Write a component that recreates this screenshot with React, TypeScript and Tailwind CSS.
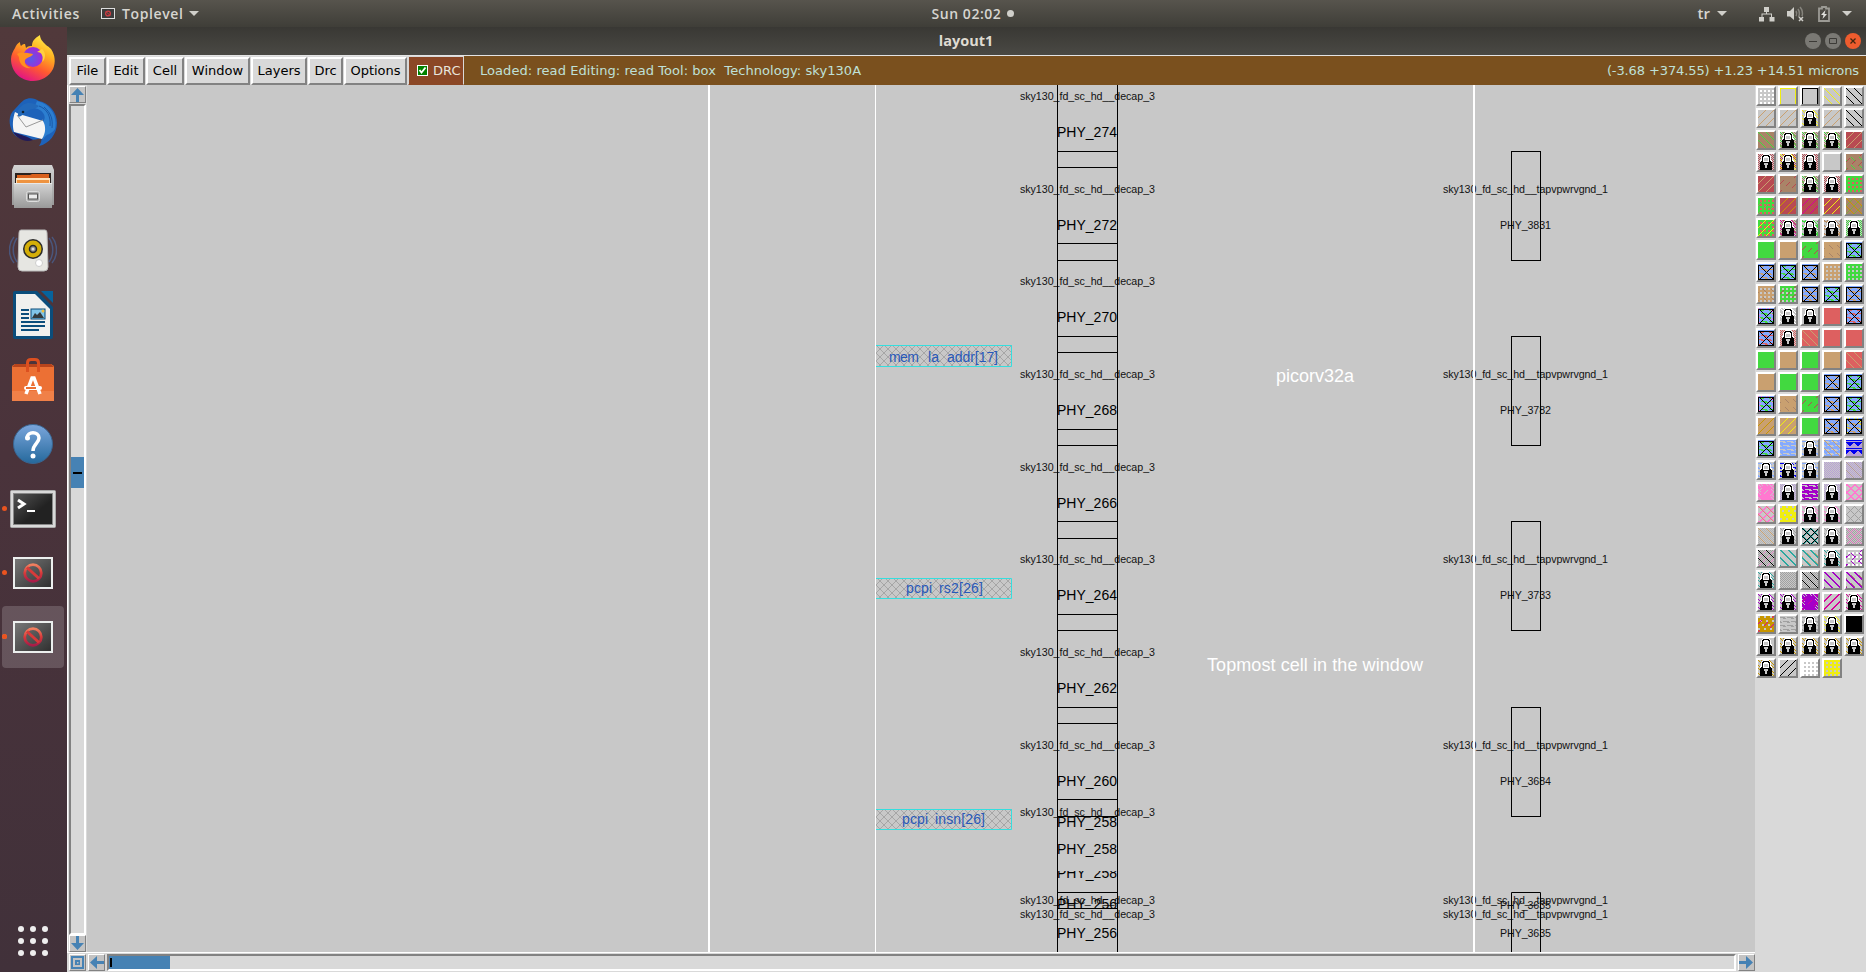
import React from "react";

const GRAY = "#c8c8c8";
const GREEN = "#42d940";
const TAN = "#c9a070";
const BROWN = "#a98468";
const RED = "#b84a52";
const SALMON = "#dd6060";
const SKY = "#84aaff";
const BLUE = "#0000f0";
const LILAC = "#b79fd6";
const PINK = "#ff78d0";
const PURPLE = "#a400c8";
const MAGENTA = "#d8009a";
const YELLOW = "#f0ee10";
const GOLD = "#c89600";
const TEAL = "#2aa8a0";
const DARK = "#a0a0a0";

/* ---------- layer palette ---------- */

const mod = (n: number, m: number) => ((n % m) + m) % m;

/* Stipples on a 16 x 16 grid: which pixels take the mark's colour. */
const stipples = {
  up: (x: number, y: number) => mod(x + y, 8) === 7,
  down: (x: number, y: number) => mod(x - y, 8) === 0,
  upWide: (x: number, y: number) => mod(x + y, 8) > 5,
  downWide: (x: number, y: number) => mod(x - y, 8) < 2,
  dashUp: (x: number, y: number) => mod(x + y, 8) === 7 && mod(x + 2 * Math.floor((x + y) / 8), 8) < 4,
  dashDown: (x: number, y: number) => mod(x - y, 8) === 2 && mod(x + 3, 8) < 4,
  dots: (x: number, y: number) => mod(x, 4) > 1 && mod(y, 4) > 1,
  check: (x: number, y: number) => mod(x + y, 2) === 0,
  waves: (x: number, y: number) => mod(y, 4) === 1 ? mod(x + y, 8) < 6 : mod(y, 4) === 2 && mod(x + y, 8) > 4,
  net: (x: number, y: number) => mod(x - y, 8) === 0 || mod(x + y, 8) === 0,
  netWide: (x: number, y: number) => mod(x - y, 8) < 2 || mod(x + y, 8) < 2,
  frame: (x: number, y: number) => y === 0 || x === 0 || x === 15,
  spots: (x: number, y: number) => mod(y, 4) < 2 && mod(x + 4 * Math.floor(y / 4), 6) < 2,
  tris: (x: number, y: number) => mod(y, 8) < 1 || (mod(y, 8) > 1 && mod(y, 8) < 6 && Math.abs(mod(x + (y > 7 ? 4 : 0), 8) - 3.5) < 6 - mod(y, 8)),
  edge: (x: number, y: number) => (x < 3 || x > 12 || y < 2) && mod(x * 3 + y * 5, 8) < 2,
  cross: (x: number, y: number) => y > 0 && (y === 1 || y === 15 || x === 0 || x === 15 || x === y - 0 || x + y === 16),
};

type Stipple = keyof typeof stipples;
type Mark = [Stipple, string] | ["lock"];
type Cell = { base: string; marks: Mark[] };

const c = (base: string, ...marks: Mark[]): Cell => ({ base, marks });
const lock = (...marks: Mark[]): Cell => c(GRAY, ...marks, ["lock"]);
const metal = (a: string, b?: string): Cell =>
  c(SKY, ["waves", a], ...(b ? [["edge", b] as Mark] : []), ["cross", "#000"]);

const cells: Cell[] = [
  c(GRAY, ["dots", "#fff"]), c(GRAY, ["frame", YELLOW]), c(GRAY, ["frame", "#000"]), c(GRAY, ["down", YELLOW]), c(GRAY, ["down", "#000"]),
  c(GRAY, ["up", TAN]), c(GRAY, ["up", TAN]), lock(["edge", YELLOW]), c(GRAY, ["up", TAN]), c(GRAY, ["down", "#000"]),
  c(BROWN, ["down", GREEN]), lock(["check", BROWN], ["edge", GREEN]), lock(["check", BROWN], ["edge", GREEN]), lock(["check", BROWN], ["edge", GREEN]), c(RED, ["up", TAN]),
  lock(["check", RED]), lock(["check", RED], ["edge", YELLOW]), lock(["check", RED]), c(GRAY), c(BROWN, ["dashDown", GREEN], ["dashUp", RED]),
  c(RED, ["up", TAN]), c(BROWN, ["dashUp", RED]), lock(["check", BROWN], ["edge", GREEN]), lock(["check", RED]), c(GREEN, ["dots", SALMON]),
  c(GREEN, ["dots", SALMON], ["dashUp", BROWN]), c(RED, ["up", GOLD]), c(RED, ["up", MAGENTA]), c(RED, ["up", YELLOW]), c(BROWN, ["down", GOLD], ["up", "#80a840"]),
  c(GREEN, ["dots", SALMON], ["up", YELLOW]), lock(["check", BROWN], ["edge", MAGENTA]), lock(["waves", GREEN], ["edge", GREEN]), lock(["waves", TAN], ["edge", BROWN]), lock(["check", GREEN]),
  c(GREEN), c(TAN), c(GREEN, ["dashUp", RED]), c(TAN, ["dashDown", BROWN]), metal(GREEN),
  metal(TAN), metal(GREEN), metal(TAN), c(TAN, ["dots", GRAY]), c(GREEN, ["dots", GRAY]),
  c(TAN, ["dots", GRAY], ["dashDown", BROWN]), c(GREEN, ["dots", GRAY], ["dashUp", RED]), metal(TAN), metal(GREEN), metal(TAN),
  metal(GREEN, PINK), lock(["edge", "#fff"]), lock(), c(SALMON), metal(SALMON),
  metal(SALMON), lock(["check", SALMON]), c(SALMON, ["down", TAN]), c(SALMON), c(SALMON),
  c(GREEN), c(TAN), c(GREEN), c(TAN), c(SALMON, ["down", TAN]),
  c(TAN), c(GREEN), c(GREEN), metal(TAN), metal(GREEN),
  metal(GREEN, PINK), c(TAN, ["dashDown", BROWN]), c(GREEN, ["dashUp", RED]), metal(TAN), metal(GREEN),
  c(TAN, ["up", GOLD]), c(TAN, ["up", YELLOW]), c(GREEN), metal(TAN), metal(TAN, YELLOW),
  metal(GREEN), c(SKY, ["waves", GRAY]), lock(["waves", SKY]), c(SKY, ["waves", GRAY], ["down", TAN]), c(LILAC, ["tris", BLUE]),
  lock(["waves", SKY]), lock(["waves", BLUE]), lock(["waves", SKY]), c(GRAY, ["check", LILAC]), c(GRAY, ["check", LILAC], ["down", "#b090a0"]),
  c(PINK, ["edge", GRAY], ["dashUp", GRAY]), lock(["check", LILAC]), c(PURPLE, ["waves", GRAY]), lock(["check", LILAC]), c(GRAY, ["netWide", PINK]),
  c(GRAY, ["netWide", PINK], ["down", TAN]), c(YELLOW, ["spots", GRAY]), lock(["edge", PINK]), lock(["edge", PINK]), c(GRAY, ["net", DARK]),
  c(GRAY, ["check", "#b4b4b4"], ["down", TAN]), lock(["edge", DARK]), c(GRAY, ["netWide", TEAL], ["net", "#000"]), lock(["edge", DARK]), c(GRAY, ["check", DARK], ["net", "#dc70b8"]),
  c(GRAY, ["check", DARK], ["net", "#dc80c0"], ["down", "#000"]), c(GRAY, ["downWide", TEAL]), c(GRAY, ["downWide", TEAL], ["dashDown", TAN]), lock(["edge", TEAL]), c(GRAY, ["dots", "#fff"], ["dashDown", PURPLE], ["dashUp", PURPLE]),
  lock(["edge", TEAL]), c(GRAY, ["check", DARK]), c(GRAY, ["check", DARK], ["down", "#000"]), c(GRAY, ["downWide", PURPLE]), c(GRAY, ["downWide", PURPLE], ["dashDown", BROWN]),
  lock(["edge", PURPLE]), lock(["edge", PURPLE]), c(PURPLE, ["edge", GRAY], ["dashUp", MAGENTA]), c(GRAY, ["upWide", MAGENTA]), lock(["edge", MAGENTA]),
  c(GOLD, ["spots", GRAY], ["dashUp", MAGENTA]), c(GRAY, ["waves", DARK]), lock(["waves", DARK]), lock(["edge", YELLOW]), c("#000"),
  lock(), lock(["edge", GOLD]), lock(["edge", GOLD]), lock(["edge", GOLD]), lock(["edge", GOLD]),
  lock(["edge", GOLD]), c(GRAY, ["up", "#000"]), c("#fff", ["dots", GRAY]), c(YELLOW, ["dots", GRAY]),
];

const lockBitmap = [
  ".....WWWWWW.....",
  "....WKKKKKKW....",
  "...WKKWWWWKKW...",
  "...WKWWWWWWKW...",
  "...WKWGGGGWKW...",
  "...WKWGGGGWKW...",
  "..WWKWGGGGWKWW..",
  "..WKKWWWWWWKKW..",
  "..KKKKKKKKKKKK..",
  "..KKKKGGGGKKKK..",
  "..KKKKGGGGKKKK..",
  "..KKKKKGGKKKKK..",
  "..KKKKKGGKKKKK..",
  "..KKKKKGGKKKKK..",
  "..KKKKKKKKKKKK..",
  "..KKKKKKKKKKKK..",
];

function pixelPath(test: (x: number, y: number) => boolean) {
  let d = "";
  for (let y = 0; y < 16; y++) {
    for (let x = 0; x < 16; x++) {
      if (test(x, y)) d += `M${x} ${y}h1v1h-1z`;
    }
  }
  return d;
}

const lockLayers = [
  { fill: "#fff", d: pixelPath((x, y) => lockBitmap[y][x] === "W") },
  { fill: "#000", d: pixelPath((x, y) => lockBitmap[y][x] === "K") },
  { fill: GRAY, d: pixelPath((x, y) => lockBitmap[y][x] === "G") },
];

function MarkShape({ mark }: { mark: Mark }) {
  if (mark[0] === "lock") {
    return (
      <g>
        {lockLayers.map((l) => (
          <path key={l.fill} d={l.d} fill={l.fill} />
        ))}
      </g>
    );
  }
  return <path d={pixelPath(stipples[mark[0]])} fill={mark[1]} />;
}

function Palette() {
  return (
    <div className="grid w-[111px] shrink-0 auto-rows-[20px] grid-cols-[repeat(5,20px)] content-start gap-[2px] bg-[#d9d9d9] pt-[1px] pl-[1px]">
      {cells.map((cell, i) => (
        <div key={i} className="h-5 w-5 border-2 border-t-white border-r-[#828282] border-b-[#828282] border-l-white">
          <svg viewBox="0 0 16 16" className="block h-4 w-4" shapeRendering="crispEdges">
            <rect width="16" height="16" fill={cell.base} />
            {cell.marks.map((m, j) => (
              <MarkShape key={j} mark={m} />
            ))}
          </svg>
        </div>
      ))}
    </div>
  );
}

/* ---------- layout drawing ---------- */

const decapRows = [274, 272, 270, 268, 266, 264, 262, 260].map((n, i) => ({ n, dy: Math.round(i * 92.65) }));
const tapRows = [
  { n: 3831, y: 151 },
  { n: 3782, y: 336 },
  { n: 3733, y: 521 },
  { n: 3684, y: 707 },
];

function SmallText({ x, y, w, children }: { x: number; y: number; w: number; children: React.ReactNode }) {
  return (
    <text x={x} y={y} textLength={w} fontSize="10.67" fill="#111">
      {children}
    </text>
  );
}

function Phy({ y, children, clip }: { y: number; children: React.ReactNode; clip?: string }) {
  return (
    <g clipPath={clip}>
      <text x="1057" y={y} textLength="60" fontSize="14" fill="#000">
        {children}
      </text>
    </g>
  );
}

function Pin({ y, h, children }: { y: number; h: number; children: React.ReactNode }) {
  return (
    <g>
      <rect x="876" y={y} width="136" height={h} fill="url(#hatch)" />
      <path d={`M876 ${y + 0.5}H1011.500V${y + h - 0.5}H876`} fill="none" stroke="#35dede" />
      <g fill="#2858b8" fontSize="14">
        {children}
      </g>
    </g>
  );
}

function Canvas() {
  return (
    <svg viewBox="87 85 1668 867" className="block h-[867px] w-[1668px] bg-[#c8c8c8] font-['Liberation_Sans',sans-serif]">
      <defs>
        <pattern id="hatch" x="876" y="345" width="8" height="8" patternUnits="userSpaceOnUse">
          <path d="M0 0L8 8M8 0L0 8" stroke="#a6a6a6" strokeWidth="1" />
        </pattern>
        <clipPath id="clip258"><rect x="1050" y="871" width="80" height="20" /></clipPath>
        <clipPath id="clip256"><rect x="1050" y="899" width="80" height="10" /></clipPath>
      </defs>

      <Pin y={345} h={22}>
        <text x="889" y="362" textLength="30">mem</text>
        <text x="928" y="362" textLength="11">la</text>
        <text x="947" y="362" textLength="51">addr[17]</text>
      </Pin>
      <Pin y={578} h={21}>
        <text x="906" y="593" textLength="26">pcpi</text>
        <text x="939" y="593" textLength="44">rs2[26]</text>
      </Pin>
      <Pin y={809} h={21}>
        <text x="902" y="824" textLength="26">pcpi</text>
        <text x="935" y="824" textLength="50">insn[26]</text>
      </Pin>

      {decapRows.map(({ n, dy }) => (
        <g key={n}>
          <SmallText x={1020} y={100 + dy} w={135}>sky130_fd_sc_hd__decap_3</SmallText>
          <Phy y={137 + dy}>PHY_{n}</Phy>
        </g>
      ))}
      {[816, 904, 918].map((y) => (
        <SmallText key={y} x={1020} y={y} w={135}>sky130_fd_sc_hd__decap_3</SmallText>
      ))}
      <Phy y={827}>PHY_258</Phy>
      <Phy y={854}>PHY_258</Phy>
      <Phy y={878} clip="url(#clip258)">PHY_258</Phy>
      <Phy y={909} clip="url(#clip256)">PHY_256</Phy>
      <Phy y={938}>PHY_256</Phy>

      {tapRows.map(({ n, y }) => (
        <g key={n}>
          <SmallText x={1443} y={y + 42} w={165}>sky130_fd_sc_hd__tapvpwrvgnd_1</SmallText>
          <SmallText x={1500} y={y + 78} w={51}>PHY_{n}</SmallText>
          <rect x="1511.5" y={y + 0.5} width="29" height="109" fill="none" stroke="#000" />
        </g>
      ))}
      {[904, 918].map((y) => (
        <SmallText key={y} x={1443} y={y} w={165}>sky130_fd_sc_hd__tapvpwrvgnd_1</SmallText>
      ))}
      <SmallText x={1500} y={909} w={51}>PHY_3635</SmallText>
      <SmallText x={1500} y={937} w={51}>PHY_3635</SmallText>

      <g stroke="#000" fill="none">
        <path d="M1511.500 952V892.500H1540.500V952M1057.500 85V952M1117.500 85V952" />
        {[151, 167, 243, 260, 336, 352, 429, 445, 521, 538, 614, 630, 707, 723, 799, 816, 892, 908].map((y) => (
          <path key={y} d={`M1057 ${y + 0.5}H1117`} />
        ))}
      </g>
      <path d="M708 85h2v867h-2zM875 85h1v867h-1zM1473 85h2v867h-2z" fill="#fff" />

      <g fill="#fff" fontSize="18">
        <text x="1276" y="382" textLength="78">picorv32a</text>
        <text x="1207" y="671" textLength="216">Topmost cell in the window</text>
      </g>
    </svg>
  );
}

/* ---------- scroll bars ---------- */

function ArrowButton({ d }: { d: string }) {
  return (
    <div className="h-[17px] w-[17px] shrink-0 border border-t-white border-r-[#828282] border-b-[#828282] border-l-white bg-[#c3c3c3]">
      <svg viewBox="0 0 15 15" className="block h-[15px] w-[15px]" fill="#4682b4" fillRule="evenodd">
        <path d={d} />
      </svg>
    </div>
  );
}

/* ---------- dock ---------- */

function ToplevelIcon() {
  return (
    <svg viewBox="0 0 40 32" className="block h-8 w-10">
      <defs>
        <linearGradient id="tl" x2="1" y2="1"><stop stopColor="#777" /><stop offset="1" stopColor="#303030" /></linearGradient>
        <linearGradient id="no" x2="0" y2="1"><stop stopColor="#f08060" /><stop offset=".5" stopColor="#d83a3a" /><stop offset="1" stopColor="#a81c48" /></linearGradient>
      </defs>
      <rect width="40" height="32" fill="#ecefee" />
      <rect x="2" y="2" width="36" height="28" fill="url(#tl)" />
      <circle cx="20" cy="16" r="8.300" fill="none" stroke="url(#no)" strokeWidth="2.800" />
      <path d="M14 10.500L26 21.500" stroke="#d83a3a" strokeWidth="3" />
    </svg>
  );
}

const dock: { name: string; icon: React.ReactNode; running?: boolean; active?: boolean }[] = [
  {
    name: "firefox",
    icon: (
      <svg viewBox="0 0 46 46" className="h-[46px] w-[46px]">
        <defs>
          <linearGradient id="ff" x1=".8" x2=".3" y2="1"><stop stopColor="#fff44f" /><stop offset=".35" stopColor="#ffb020" /><stop offset=".65" stopColor="#ff5a30" /><stop offset="1" stopColor="#e0108a" /></linearGradient>
          <radialGradient id="ffg" cx=".4" cy=".6"><stop stopColor="#5a5ae8" /><stop offset="1" stopColor="#9a30d8" /></radialGradient>
        </defs>
        <path d="M5 13C6 10 8 8 10 7C10 9 10.500 10 11 11C13 9 14 9 15 9L16 13C18 11 20 11 22 11C22 6 25 3 30 0C30 4 33 7 36 10C40 13 39 12 41 14C45 20 46 27 43 34C39 42 31 46 23 46C10 46 1 36 1 24C1 20 3 16 5 13Z" fill="url(#ff)" />
        <circle cx="23" cy="22" r="10" fill="url(#ffg)" />
        <path d="M7 19C11 16 17 18 23 19C22 22 17 22 15 25C14 29 17 32 21 33C14 34 9 29 9 22Z" fill="#ff9020" />
        <path d="M27 17C32 17 34 22 32 27C36 24 36 17 32 14Z" fill="#ffd040" />
      </svg>
    ),
  },
  {
    name: "thunderbird",
    icon: (
      <svg viewBox="0 0 48 48" className="h-12 w-12">
        <path d="M15 2C20-1 26 0 30 3C40 5 48 14 48 25C48 36 40 46 30 48C33 44 32 42 33 40C20 44 7 42 3 33C-1 24 0 16 6 11C9 8 11 5 15 2Z" fill="#1d62ba" />
        <path d="M28 3C41 6 49 17 46 31C41 38 38 34 34 42C35 35 35 28 34 24C39 17 32 11 25 10Z" fill="#2c7ed0" />
        <path d="M30 8C38 11 42 18 41 28M35 9C42 15 44 21 43 30" stroke="#1858a8" fill="none" />
        <path d="M6 14C4 20 3 27 5 34L33 41C37 35 37 28 34 23L10 16Z" fill="#f4f4f4" />
        <path d="M8 17L17 29L34 22" fill="none" stroke="#999" />
        <path d="M9 12C14 4 22 3 30 8C26 12 22 10 19 13C14 16 11 20 9 18Z" fill="#2369ba" />
        <circle cx="14" cy="14" r="1.300" fill="#123" />
        <path d="M4 34C12 37 18 38 24 42C16 45 9 41 4 34Z" fill="#211a58" />
      </svg>
    ),
  },
  {
    name: "files",
    icon: (
      <svg viewBox="0 0 42 44" className="h-11 w-[42px]">
        <defs><linearGradient id="fl" x2="0" y2="1"><stop stopColor="#d4d4d4" /><stop offset="1" stopColor="#999" /></linearGradient></defs>
        <path d="M2 0H40L42 5V40H0V5Z" fill="url(#fl)" />
        <rect x="3" y="8" width="36" height="11" fill="#2b211e" />
        <path d="M5 10H18L20 9H37V18H5Z" fill="#d9601c" />
        <path d="M4 13H38V18H4Z" fill="#ffe0b8" /><path d="M5 15H37V18H5Z" fill="#ee9340" />
        <path d="M2 18H40V43H2Z" fill="url(#fl)" /><path d="M2 18.500H40" stroke="#e8e8e8" />
        <rect x="14.500" y="26.500" width="13" height="10" rx="2" fill="#aaa" stroke="#ddd" />
        <rect x="16.500" y="29" width="9" height="5" fill="#ececec" stroke="#555" />
      </svg>
    ),
  },
  {
    name: "rhythmbox",
    icon: (
      <svg viewBox="0 0 48 44" className="h-11 w-12">
        <path d="M5 8C-1 15-1 27 5 34M8 9C3 16 3 26 8 33M43 8C49 15 49 27 43 34M40 9C45 16 45 26 40 33" fill="none" stroke="#4a567c" strokeWidth="1.500" />
        <path d="M12 1H36Q38 1 38 4L39 38Q39 42 35 42H13Q9 42 9 38L10 4Q10 1 12 1Z" fill="#e6e6e2" stroke="#bbb" />
        <circle cx="24" cy="20" r="10" fill="#2b2b2b" /><circle cx="24" cy="20" r="8.500" fill="#d4ae08" />
        <circle cx="24" cy="20" r="3.500" fill="#888" stroke="#292929" strokeWidth="1.500" /><circle cx="24" cy="20" r="1.500" fill="#ddd" />
        <circle cx="30" cy="34" r="3.500" fill="#fff" stroke="#ccc" />
      </svg>
    ),
  },
  {
    name: "writer",
    icon: (
      <svg viewBox="0 0 40 48" className="h-12 w-10">
        <path d="M2 0H24L40 16V46Q40 48 38 48H2Q0 48 0 46V2Q0 0 2 0Z" fill="#0b4d7b" />
        <path d="M28 0H40V12Z" fill="#07639c" />
        <path d="M3 3H22L37 18V45H3Z" fill="#f0f0ee" />
        <path d="M8 19H16M8 23H16M8 27H16M8 31H32M8 35H32M8 39H26" stroke="#0b4d7b" strokeWidth="2" />
        <rect x="18" y="18" width="14" height="10" fill="#80c5e8" stroke="#0b4d7b" strokeWidth="1" />
        <path d="M19 27L22 22L24 24L27 21L31 27Z" fill="#333b3d" /><circle cx="30" cy="20" r="1.500" fill="#f0c040" />
      </svg>
    ),
  },
  {
    name: "software",
    icon: (
      <svg viewBox="0 0 42 44" className="h-11 w-[42px]">
        <path d="M0 8L3 6H39L42 8V43H0Z" fill="#ec7034" /><path d="M0 9H42L39 6H3Z" fill="#b8441c" />
        <path d="M0 33H42V43H0Z" fill="#f08048" />
        <path d="M15.500 14V5Q15.500 1.500 19 1.500H23Q26.500 1.500 26.500 5V14" fill="none" stroke="#dc5020" strokeWidth="3" />
        <path d="M14 36L20 20H22L28 36" fill="none" stroke="#fff" strokeWidth="3.500" />
        <rect x="12" y="28" width="18" height="4" rx="2" fill="#fff" /><path d="M14 30H24" stroke="#ec7034" strokeWidth="2" />
      </svg>
    ),
  },
  {
    name: "help",
    icon: (
      <svg viewBox="0 0 40 40" className="h-10 w-10">
        <defs><linearGradient id="hp" x2="0" y2="1"><stop stopColor="#7ba6dc" /><stop offset="1" stopColor="#25699c" /></linearGradient></defs>
        <circle cx="20" cy="20" r="19.500" fill="url(#hp)" stroke="#3a6590" />
        <path d="M14 14C14 7 26 7 26 14C26 19 20 20 20 27" fill="none" stroke="#fff" strokeWidth="3.500" />
        <circle cx="20" cy="32" r="2.500" fill="#fff" /><circle cx="14.500" cy="14" r="2.500" fill="#fff" />
      </svg>
    ),
  },
  {
    name: "terminal",
    running: true,
    icon: (
      <svg viewBox="0 0 46 38" className="relative top-px h-[38px] w-[46px]">
        <defs><linearGradient id="tm" x2="1" y2="1"><stop stopColor="#555" /><stop offset=".6" stopColor="#222" /></linearGradient></defs>
        <rect x=".5" y=".5" width="45" height="37" rx="1" fill="#d9d9d9" stroke="#aaa" />
        <rect x="3.500" y="3.500" width="39" height="31" fill="url(#tm)" stroke="#888" />
        <path d="M8 10L14 14L8 18" fill="none" stroke="#fff" strokeWidth="3" /><path d="M17 21H25" stroke="#fff" strokeWidth="2" />
      </svg>
    ),
  },
  { name: "toplevel-1", running: true, icon: <ToplevelIcon /> },
  { name: "toplevel-2", running: true, active: true, icon: <ToplevelIcon /> },
];

function Dock() {
  return (
    <aside className="flex w-[67px] shrink-0 flex-col bg-linear-to-b from-[#51393b] via-[#4a333b] via-45% to-[#41313a]">
      <div className="-mt-px flex flex-col">
        {dock.map((d) => (
          <div key={d.name} className="flex h-[64.3px] shrink-0 items-center">
            <span className={`ml-[2px] h-[5px] w-[5px] shrink-0 rounded-full ${d.running ? "bg-[#ea5420]" : ""}`} />
            <div className={`-ml-[5px] flex h-[62px] w-[62px] items-center justify-center rounded ${d.active ? "bg-white/17" : ""}`}>{d.icon}</div>
            {d.active && <span className="-ml-[62px] h-[5px] w-[5px] rounded-full bg-[#ea5420]" />}
          </div>
        ))}
      </div>
      <div className="mt-auto mb-[16px] ml-[18px] grid w-[30px] grid-cols-3 gap-[6px]">
        {Array.from({ length: 9 }, (_, i) => (
          <span key={i} className="h-[6px] w-[6px] rounded-full bg-[#eee]" />
        ))}
      </div>
    </aside>
  );
}

/* ---------- chrome ---------- */

function Caret() {
  return <span className="h-0 w-0 border-x-[5px] border-t-[5px] border-x-transparent border-t-[#d0cfca]" />;
}

function TopBar() {
  return (
    <header className="grid h-[27px] shrink-0 grid-cols-[1fr_auto_1fr] items-center bg-linear-to-b from-[#57544d] to-[#3f3e38] font-['Open_Sans',sans-serif] text-[14px] font-semibold text-[#d6d5d0]">
      <div className="flex items-center">
        <span className="ml-3 w-[68px] tracking-[0.65px]">Activities</span>
        <svg viewBox="0 0 14 11" className="ml-[21px] h-[11px] w-[14px]">
          <rect x=".5" y=".5" width="13" height="10" fill="#3c3c3c" stroke="#ddd" />
          <circle cx="7" cy="5.500" r="2.400" fill="none" stroke="#cc3c42" strokeWidth="1.300" /><path d="M5 3.500L9 7.500" stroke="#cc3c42" />
        </svg>
        <span className="mr-1.5 ml-[7px] w-[61px] tracking-[0.6px]">Toplevel</span>
        <Caret />
      </div>
      <div className="flex items-center gap-1 pl-[79px]">
        <span className="w-[71px] whitespace-nowrap tracking-[0.55px]">Sun 02:02</span>
        <span className="h-[7px] w-[7px] rounded-full bg-[#d0cfca]" />
      </div>
      <div className="flex items-center justify-end pr-[14px]">
        <span className="mr-[7px] text-[15px]">tr</span>
        <Caret />
        <svg viewBox="0 0 16 16" className="ml-8 h-4 w-4" fill="#d0cfca">
          <path d="M5 1H10V6H8V7.500H13V11H15.500V15.500H10.500V11H12V8.500H3.500V11H5V15.500H0V11H2.500V7.500H7V6H5Z" />
        </svg>
        <svg viewBox="0 0 18 16" className="ml-3 h-4 w-[18px]">
          <path d="M0 5H3L7 1V14L3 10.500H0Z" fill="#d0cfca" />
          <path d="M9 5Q10.500 7.500 9 10M11 3Q13.500 7 11.500 11M13 1Q16.500 5 15 10" stroke="#85837c" strokeWidth="1.500" fill="none" />
          <path d="M12 11L16 15M16 11L12 15" stroke="#d0cfca" strokeWidth="1.500" />
        </svg>
        <svg viewBox="0 0 12 16" className="ml-[13px] h-4 w-3">
          <path d="M1 2.500H4V1H8V2.500H11V15H1Z" fill="none" stroke="#9c9b95" strokeWidth="1.800" />
          <path d="M7.500 4L3 9H5.500L4.500 13L9 8H6.500Z" fill="#e0e0dc" />
        </svg>
        <span className="ml-3 flex"><Caret /></span>
      </div>
    </header>
  );
}

function TitleBar() {
  return (
    <div className="flex h-[28px] shrink-0 items-center bg-linear-to-b from-[#393834] to-[#4a4944]">
      <div className="flex-1" />
      <h1 className="pl-[4px] font-['Open_Sans',sans-serif] text-[14.5px] font-bold text-[#dfdbd2]">layout1</h1>
      <div className="flex flex-1 justify-end gap-1 pr-[5px]">
        <svg viewBox="0 0 16 16" className="h-4 w-4"><circle cx="8" cy="8" r="8" fill="#7a7974" /><path d="M4 8.500H12" stroke="#3c3b37" /></svg>
        <svg viewBox="0 0 16 16" className="h-4 w-4"><circle cx="8" cy="8" r="8" fill="#7a7974" /><path d="M4.500 5.500H11.500V10.500H4.500Z" stroke="#3c3b37" fill="none" /></svg>
        <svg viewBox="0 0 16 16" className="h-4 w-4"><circle cx="8" cy="8" r="8" fill="#ee5c2e" /><path d="M5.500 5.500L10.500 10.500M10.500 5.500L5.500 10.500" stroke="#42260f" strokeWidth="1.300" /></svg>
      </div>
    </div>
  );
}

const menus = [
  { label: "File", width: "w-[37px]" },
  { label: "Edit", width: "w-[38px]" },
  { label: "Cell", width: "w-[38px]" },
  { label: "Window", width: "w-[65px]" },
  { label: "Layers", width: "w-[56px]" },
  { label: "Drc", width: "w-[35px]" },
  { label: "Options", width: "w-[63px]" },
];

function MenuBar() {
  return (
    <div className="flex h-[30px] shrink-0 border-t border-[#e4e4e4] bg-[#7a501e] font-['DejaVu_Sans',sans-serif] text-[13px]">
      <div className="flex gap-px bg-[#d9d9d9] pt-px pr-px pl-[2px]">
        {menus.map((m) => (
          <button key={m.label} className={`h-7 border-2 border-t-white border-r-[#828282] border-b-[#828282] border-l-white bg-[#d9d9d9] text-center leading-6 text-black ${m.width}`}>
            {m.label}
          </button>
        ))}
      </div>
      <div className="flex w-[56px] items-center border border-[#d9d9d9] border-b-[#8b4726] bg-[#8b4726] pl-2 text-[#e8e4dc]">
        <svg viewBox="0 0 11 11" className="mr-[5px] h-[11px] w-[11px]">
          <rect width="11" height="11" fill="#fff" /><rect x="1" y="1" width="9" height="9" fill="#008200" />
          <path d="M2.500 5L4.500 7.500L8.500 2.500" fill="none" stroke="#fff" strokeWidth="1.800" />
        </svg>
        DRC
      </div>
      <div className="flex flex-1 items-center justify-between pr-[7px] pl-4 whitespace-pre text-[#bfe0d8]">
        <span className="tracking-[0.06px]">Loaded: read Editing: read Tool: box  Technology: sky130A</span>
        <span className="tracking-[-0.11px]">(-3.68 +374.55) +1.23 +14.51 microns</span>
      </div>
    </div>
  );
}

export default function App() {
  return (
    <div className="flex h-[972px] w-[1866px] flex-col overflow-hidden bg-[#d9d9d9]">
      <TopBar />
      <div className="flex min-h-0 flex-1">
        <Dock />
        <main className="flex min-w-0 flex-1 flex-col">
          <TitleBar />
          <MenuBar />
          <div className="flex min-h-0 flex-1">
            <div className="flex w-[1688px] shrink-0 flex-col">
              <div className="flex h-[867px]">
                <div className="flex w-5 shrink-0 flex-col items-center border-l border-white pt-px">
                  <ArrowButton d="M7.500 1L14 8H9V15H6V8H1Z" />
                  <div className="mt-px flex w-[17px] flex-1 flex-col border-2 border-t-[#828282] border-r-white border-b-white border-l-[#828282] pt-[351px]">
                    <div className="flex h-[31px] items-center justify-center bg-[#4682b4]">
                      <span className="h-[2px] w-[9px] bg-black" />
                    </div>
                  </div>
                  <ArrowButton d="M7.500 14L1 7H6V0H9V7H14Z" />
                </div>
                <Canvas />
              </div>
              <div className="flex h-5 items-center gap-[2px] border-t border-white pl-[2px]">
                <ArrowButton d="M1 1H14V14H1ZM3 3V12H12V3ZM5 5H10V10H5ZM7 7V8.500H8.500V7Z" />
                <ArrowButton d="M1 7.500L8 1V6H15V9H8V14Z" />
                <div className="flex h-[17px] flex-1 border-2 border-t-[#828282] border-r-white border-b-white border-l-[#828282]">
                  <div className="flex w-[61px] items-center bg-[#4682b4] pl-px">
                    <span className="h-[9px] w-[2px] bg-black" />
                  </div>
                </div>
                <ArrowButton d="M14 7.500L7 1V6H0V9H7V14Z" />
              </div>
            </div>
            <Palette />
          </div>
        </main>
      </div>
    </div>
  );
}
